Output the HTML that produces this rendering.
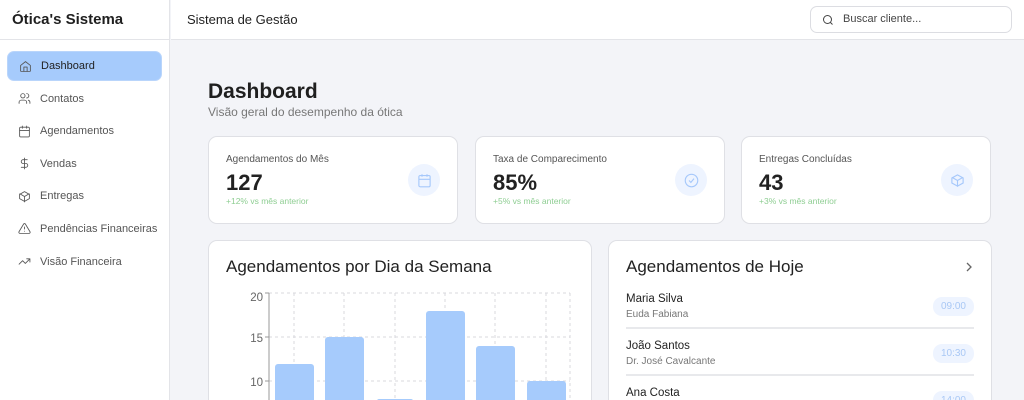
<!DOCTYPE html><html><head><meta charset="utf-8"><style>
*{box-sizing:border-box;margin:0;padding:0}
html,body{width:1024px;height:400px;overflow:hidden}
body{font-family:"Liberation Sans",sans-serif;background:#f3f4f8;color:#1f1f1f;position:relative}
.sb{position:absolute;left:0;top:0;width:170px;height:400px;background:#fff;border-right:1px solid #e3e4e8}
.logo{height:40px;border-bottom:1px solid #e3e4e8;font-weight:bold;font-size:15px;padding:11px 0 0 12px}
.nav{padding:11px 7px}
.it{height:30px;border-radius:7px;display:flex;align-items:center;padding-left:11px;font-size:11px;color:#555;margin-bottom:2.6px}
.it svg{width:13px;height:13px;margin-right:9px;fill:none;stroke:#555;stroke-width:1.6;stroke-linecap:round;stroke-linejoin:round}
.it.a{background:#a6cbfc;color:#222;border:1px solid #b9d5fb}
.hd{position:absolute;left:171px;top:0;right:0;height:40px;background:#fff;border-bottom:1px solid #e3e4e8}
.hd .t{position:absolute;left:16px;top:12px;font-size:13px}
.srch{position:absolute;left:639px;top:6px;width:202px;height:27px;border:1px solid #dcdde2;border-radius:7px;font-size:11px;color:#444;padding:6px 0 0 32px}
.srch svg{position:absolute;left:11px;top:7px}
h1{position:absolute;left:208px;top:80px;font-size:21px;font-weight:bold}
.sub{position:absolute;left:208px;top:105px;font-size:12px;color:#777}
.card{position:absolute;background:#fff;border:1px solid #dfe0e5;border-radius:9px}
.bot{height:160px;border-bottom:none;border-radius:9px 9px 0 0;overflow:hidden}
.st .l{position:absolute;left:17px;top:17px;font-size:10px;color:#555}
.st .v{position:absolute;left:17px;top:33px;font-size:22px;font-weight:bold;color:#222}
.st .g{position:absolute;left:17px;top:59px;font-size:8.5px;color:#8fce93}
.st .ic{position:absolute;right:17px;top:27px;width:32px;height:32px;border-radius:50%;background:#eef4ff;display:flex;align-items:center;justify-content:center}
.ct{position:absolute;left:17px;top:16px;font-size:17px;color:#222}
.row{position:absolute;left:17px;right:17px;height:41px;border-bottom:2px solid #e8e9ec}
.row .n{position:absolute;top:5px;font-size:11.5px;color:#222}
.row .s{position:absolute;top:21px;font-size:10px;color:#777}
.row .tm{position:absolute;right:0;top:9px;background:#eef4ff;color:#a9c8f5;font-size:10px;padding:4px 8px;border-radius:9px}
</style></head><body>
<div class="sb"><div class="logo">Ótica's Sistema</div>
<div class="nav">
<div class="it a"><svg viewBox="0 0 24 24"><path d="M3 10l9-7 9 7v10a1 1 0 0 1-1 1H4a1 1 0 0 1-1-1z"/><path d="M9 21v-8h6v8"/></svg>Dashboard</div>
<div class="it"><svg viewBox="0 0 24 24"><circle cx="9" cy="7" r="4"/><path d="M2 21v-2a4 4 0 0 1 4-4h6a4 4 0 0 1 4 4v2M16 3a4 4 0 0 1 0 8M22 21v-2a4 4 0 0 0-3-3.9"/></svg>Contatos</div>
<div class="it"><svg viewBox="0 0 24 24"><rect x="3" y="4" width="18" height="18" rx="2"/><path d="M16 2v4M8 2v4M3 10h18"/></svg>Agendamentos</div>
<div class="it"><svg viewBox="0 0 24 24"><path d="M12 2v20M17 5H9.5a3.5 3.5 0 0 0 0 7h5a3.5 3.5 0 0 1 0 7H6"/></svg>Vendas</div>
<div class="it"><svg viewBox="0 0 24 24"><path d="M21 16V8l-9-5-9 5v8l9 5z"/><path d="M3.3 7L12 12l8.7-5M12 22V12"/></svg>Entregas</div>
<div class="it"><svg viewBox="0 0 24 24"><path d="M10.3 3.9L1.8 18a2 2 0 0 0 1.7 3h17a2 2 0 0 0 1.7-3L13.7 3.9a2 2 0 0 0-3.4 0z"/><path d="M12 9v4M12 17h0"/></svg>Pendências Financeiras</div>
<div class="it"><svg viewBox="0 0 24 24"><path d="M22 7l-8.5 8.5-5-5L2 17M16 7h6v6"/></svg>Visão Financeira</div>
</div></div>
<div class="hd"><div class="t">Sistema de Gestão</div>
<div class="srch"><svg width="12" height="12" viewBox="0 0 24 24" fill="none" stroke="#444" stroke-width="2"><circle cx="11" cy="11" r="8"/><path d="M21 21l-4.3-4.3"/></svg>Buscar cliente...</div></div>
<h1>Dashboard</h1><div class="sub">Visão geral do desempenho da ótica</div>
<div class="card st" style="left:208px;top:136px;width:250px;height:88px"><div class="l">Agendamentos do Mês</div><div class="v">127</div><div class="g">+12% vs mês anterior</div><div class="ic"><svg width="15" height="15" viewBox="0 0 24 24" fill="none" stroke="#a6c8fb" stroke-width="1.8"><rect x="3" y="4" width="18" height="18" rx="2"/><path d="M16 2v4M8 2v4M3 10h18"/></svg></div></div>
<div class="card st" style="left:475px;top:136px;width:250px;height:88px"><div class="l">Taxa de Comparecimento</div><div class="v">85%</div><div class="g">+5% vs mês anterior</div><div class="ic"><svg width="15" height="15" viewBox="0 0 24 24" fill="none" stroke="#a6c8fb" stroke-width="1.8"><circle cx="12" cy="12" r="10"/><path d="M8 12l3 3 5-6"/></svg></div></div>
<div class="card st" style="left:741px;top:136px;width:250px;height:88px"><div class="l">Entregas Concluídas</div><div class="v">43</div><div class="g">+3% vs mês anterior</div><div class="ic"><svg width="15" height="15" viewBox="0 0 24 24" fill="none" stroke="#a6c8fb" stroke-width="1.8"><path d="M21 16V8l-9-5-9 5v8l9 5z"/><path d="M3.3 7L12 12l8.7-5M12 22V12"/></svg></div></div>
<div class="card bot" style="left:208px;top:240px;width:384px"><div class="ct">Agendamentos por Dia da Semana</div></div>
<svg style="position:absolute;left:0;top:0" width="1024" height="400">
<g stroke="#d8d9dd" stroke-dasharray="3 3" stroke-width="1"><path d="M269 293H570M269 337H570M269 381H570M294 293V400M344 293V400M395 293V400M445 293V400M495 293V400M546 293V400M570 293V400"/></g>
<path d="M269 293V400" stroke="#999" stroke-width="1"/><path d="M265 293h4M265 337h4M265 381h4" stroke="#999"/>
<g font-size="11.5" fill="#666" text-anchor="end" font-family="Liberation Sans"><text x="263" y="301">20</text><text x="263" y="342">15</text><text x="263" y="386">10</text></g>
<g fill="#a6cbfc"><rect x="275" y="364" width="39" height="40" rx="3"/><rect x="325" y="337" width="39" height="67" rx="3"/><rect x="377" y="399" width="36" height="5" rx="2"/><rect x="426" y="311" width="39" height="93" rx="3"/><rect x="476" y="346" width="39" height="58" rx="3"/><rect x="527" y="381" width="39" height="23" rx="3"/></g>
</svg>
<div class="card bot" style="left:608px;top:240px;width:384px"><div class="ct">Agendamentos de Hoje</div>
<svg style="position:absolute;right:18px;top:21px" width="8" height="10" viewBox="0 0 8 10" fill="none" stroke="#666" stroke-width="1.3"><path d="M2 1l4 4-4 4"/></svg>
<div class="row" style="top:47px"><div class="n">Maria Silva</div><div class="s">Euda Fabiana</div><div class="tm">09:00</div></div>
<div class="row" style="top:94px"><div class="n">João Santos</div><div class="s">Dr. José Cavalcante</div><div class="tm">10:30</div></div>
<div class="row" style="top:141px;border:none;height:19px;overflow:visible"><div class="n">Ana Costa</div><div class="tm">14:00</div></div>
</div>
</body></html>
